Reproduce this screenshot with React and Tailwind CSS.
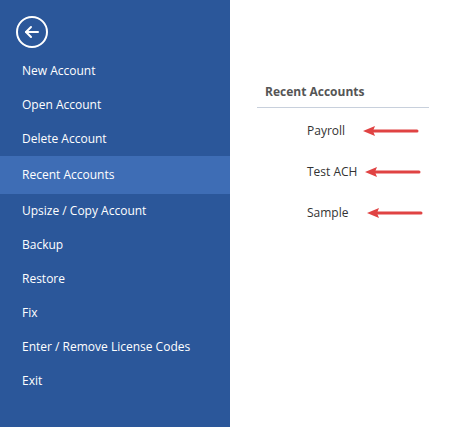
import React from 'react';

const items = [
  'New Account',
  'Open Account',
  'Delete Account',
  'Recent Accounts',
  'Upsize / Copy Account',
  'Backup',
  'Restore',
  'Fix',
  'Enter / Remove License Codes',
  'Exit',
];

const recent = ['Payroll', 'Test ACH', 'Sample'];

const Arrow = () => (
  <svg width="58" height="12" viewBox="0 0 58 12">
    <line x1="10" y1="6" x2="55" y2="6" stroke="#e04343" strokeWidth="3" strokeLinecap="round" />
    <path d="M1 6 L13 1 L11 6 L13 11 Z" fill="#e04343" />
  </svg>
);

export default function App() {
  return (
    <div className="flex w-[473px] h-[427px] bg-white" style={{ fontFamily: '"Open Sans", sans-serif' }}>
      <div className="w-[230px] h-full bg-[#2b579a] text-white text-[12px] flex flex-col">
        <div className="h-[54px] pl-4 pt-4">
          <div className="w-[32px] h-[32px] rounded-full border-2 border-white flex items-center justify-center">
            <svg width="18" height="18" viewBox="0 0 18 18" fill="none" stroke="white" strokeWidth="2" strokeLinecap="round" strokeLinejoin="round">
              <line x1="3" y1="9" x2="15" y2="9" />
              <polyline points="8,4 3,9 8,14" />
            </svg>
          </div>
        </div>
        {items.map((it) => (
          <div
            key={it}
            className={`pl-[22px] flex items-center ${it === 'Recent Accounts' ? 'h-[38px] bg-[#3e6db5]' : 'h-[34px]'}`}
          >
            {it}
          </div>
        ))}
      </div>
      <div className="flex-1 pl-[27px] pt-[83px] text-[12px]">
        <div className="w-[172px] border-b border-[#c8d0dc] pb-[6px] pl-2 font-bold text-[#555]">Recent Accounts</div>
        <div className="flex flex-col gap-[23px] pt-[14px] pl-[50px] text-[#333]">
          {recent.map((r, i) => (
            <div key={r} className="flex items-center h-[18px]">
              <span className={i === 0 ? 'w-[55px]' : i === 1 ? 'w-[57px]' : 'w-[59px]'}>{r}</span>
              <Arrow />
            </div>
          ))}
        </div>
      </div>
    </div>
  );
}
